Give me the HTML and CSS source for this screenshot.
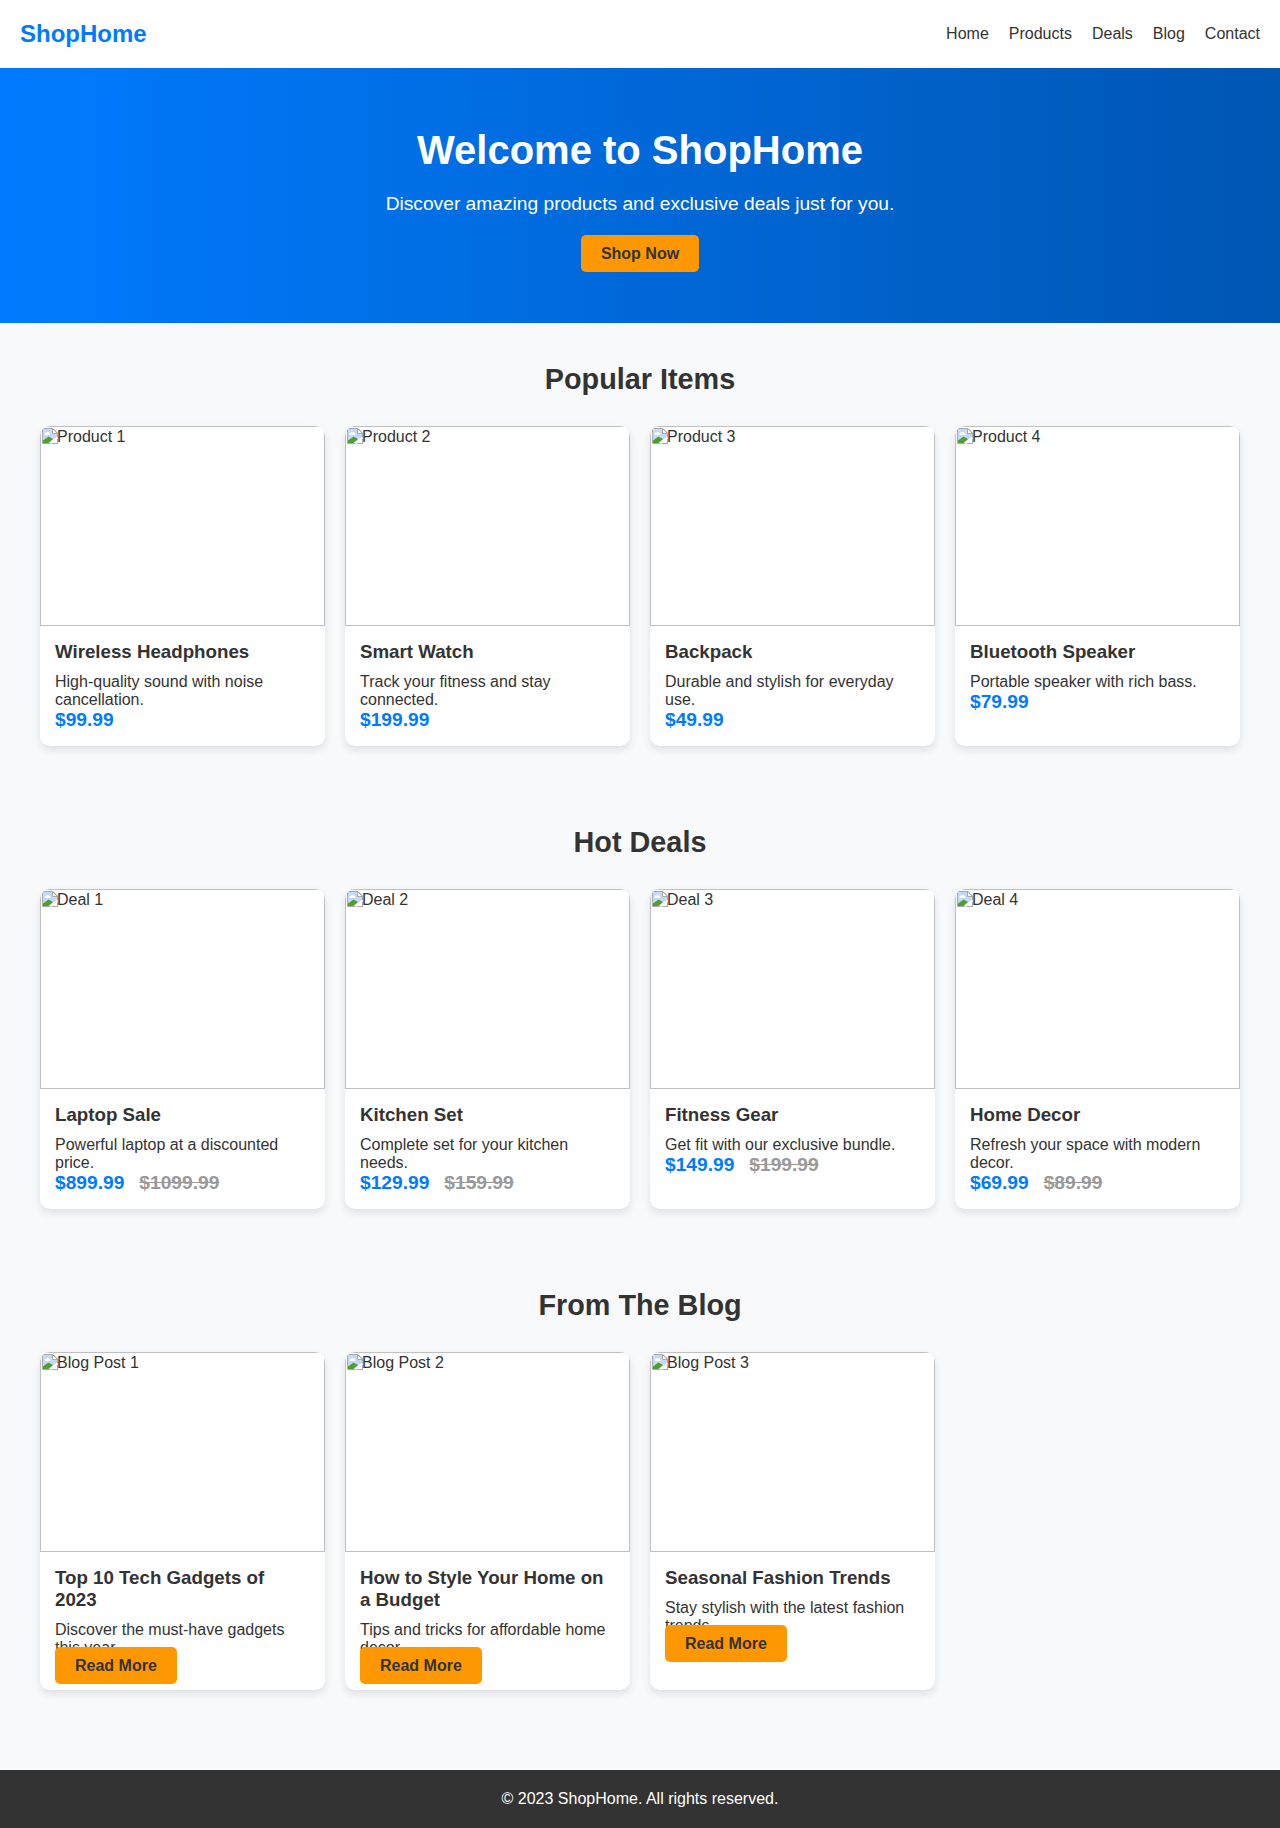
FILE: index.html
```html
<!DOCTYPE html>
<html lang="en">
<head>
<meta charset="utf-8">
<title>ShopHome</title>
<link rel="stylesheet" href="styles.css">
</head>
<body>
<svg class="defs" width="0" height="0" aria-hidden="true"><defs>
<symbol id="broken" viewBox="0 0 16 16">
<path d="M.5.5H11L15.500 5V15.500H.5Z" fill="#fff" stroke="#a9a9a9"/>
<path d="M1 1H10.500L15 5.500V9L6 15H1Z" fill="#c5d8f8"/>
<path d="M2.500 6a1.500 1.500 0 0 1 2-1.500 1.800 1.800 0 0 1 3 .6 1.100 1.100 0 0 1 .6 1.900H3.500A1 1 0 0 1 2.500 6Z" fill="#fff"/>
<path d="M1 15V12.500L6.500 8.500L11 11L6.500 15Z" fill="#4f9f2c"/>
<path d="M10.500 .5V5.500H15.500L10.500 .5Z" fill="#fff" stroke="#a9a9a9"/>
<path d="M8.500 15.500L15.500 9.500" stroke="#fff" stroke-width="1.800" fill="none"/>
<path d="M12 15.500H15.500V12" fill="none" stroke="#a9a9a9"/>
</symbol>
</defs></svg>
<header class="site-header">
  <div class="logo">ShopHome</div>
  <nav class="nav">
    <a href="#">Home</a><a href="#">Products</a><a href="#">Deals</a><a href="#">Blog</a><a href="#">Contact</a>
  </nav>
</header>
<section class="hero">
  <h1>Welcome to ShopHome</h1>
  <p>Discover amazing products and exclusive deals just for you.</p>
  <a href="#" class="btn">Shop Now</a>
</section>

<section class="section">
  <h2>Popular Items</h2>
  <div class="grid">
    <article class="card"><div class="image"><svg class="broken"><use href="#broken"/></svg>Product 1</div><div class="body"><h3>Wireless Headphones</h3><p>High-quality sound with noise cancellation.</p><span class="price">$99.99</span></div></article>
    <article class="card"><div class="image"><svg class="broken"><use href="#broken"/></svg>Product 2</div><div class="body"><h3>Smart Watch</h3><p>Track your fitness and stay connected.</p><span class="price">$199.99</span></div></article>
    <article class="card"><div class="image"><svg class="broken"><use href="#broken"/></svg>Product 3</div><div class="body"><h3>Backpack</h3><p>Durable and stylish for everyday use.</p><span class="price">$49.99</span></div></article>
    <article class="card"><div class="image"><svg class="broken"><use href="#broken"/></svg>Product 4</div><div class="body"><h3>Bluetooth Speaker</h3><p>Portable speaker with rich bass.</p><span class="price">$79.99</span></div></article>
  </div>
</section>

<section class="section">
  <h2>Hot Deals</h2>
  <div class="grid">
    <article class="card"><div class="image"><svg class="broken"><use href="#broken"/></svg>Deal 1</div><div class="body"><h3>Laptop Sale</h3><p>Powerful laptop at a discounted price.</p><span class="price">$899.99</span><span class="old">$1099.99</span></div></article>
    <article class="card"><div class="image"><svg class="broken"><use href="#broken"/></svg>Deal 2</div><div class="body"><h3>Kitchen Set</h3><p>Complete set for your kitchen needs.</p><span class="price">$129.99</span><span class="old">$159.99</span></div></article>
    <article class="card"><div class="image"><svg class="broken"><use href="#broken"/></svg>Deal 3</div><div class="body"><h3>Fitness Gear</h3><p>Get fit with our exclusive bundle.</p><span class="price">$149.99</span><span class="old">$199.99</span></div></article>
    <article class="card"><div class="image"><svg class="broken"><use href="#broken"/></svg>Deal 4</div><div class="body"><h3>Home Decor</h3><p>Refresh your space with modern decor.</p><span class="price">$69.99</span><span class="old">$89.99</span></div></article>
  </div>
</section>

<section class="section">
  <h2>From The Blog</h2>
  <div class="grid">
    <article class="card"><div class="image"><svg class="broken"><use href="#broken"/></svg>Blog Post 1</div><div class="body"><h3>Top 10 Tech Gadgets of 2023</h3><p>Discover the must-have gadgets this year.</p><a href="#" class="btn">Read More</a></div></article>
    <article class="card"><div class="image"><svg class="broken"><use href="#broken"/></svg>Blog Post 2</div><div class="body"><h3>How to Style Your Home on a Budget</h3><p>Tips and tricks for affordable home decor.</p><a href="#" class="btn">Read More</a></div></article>
    <article class="card"><div class="image"><svg class="broken"><use href="#broken"/></svg>Blog Post 3</div><div class="body"><h3>Seasonal Fashion Trends</h3><p>Stay stylish with the latest fashion trends.</p><a href="#" class="btn">Read More</a></div></article>
  </div>
</section>

<footer class="footer">© 2023 ShopHome. All rights reserved.</footer>
</body>
</html>
```
FILE: styles.css
```css
* { box-sizing: border-box; }
body { margin: 0; background: #f8f9fa; color: #333; font-family: Helvetica, Arial, "Liberation Sans", sans-serif; font-size: 16px; }
.defs { position: absolute; }
.site-header { display: flex; justify-content: space-between; align-items: center; padding: 20px; background: #fff; }
.logo { font-size: 24px; font-weight: 700; color: #007bff; }
.nav { display: flex; gap: 20px; }
.nav a { color: #333; text-decoration: none; }
.hero { padding: 60px 20px; text-align: center; color: #fff; background: linear-gradient(90deg, #007bff, #0056b3); }
.hero h1 { margin: 0 0 20px; font-size: 40px; }
.hero p { margin: 0 0 30px; font-size: 19.2px; }
.btn { padding: 10px 20px; border-radius: 5px; background: #ff9800; color: #333; font-weight: 700; text-decoration: none; }
.section { padding: 40px; }
.section h2 { margin: 0 0 30px; font-size: 28.8px; text-align: center; }
.grid { display: grid; grid-template-columns: repeat(4, 1fr); gap: 20px; }
.card { overflow: hidden; border-radius: 10px; background: #fff; box-shadow: 0 4px 8px rgba(0, 0, 0, 0.1); }
.image { height: 200px; padding: 1px 1px 0; border: 1px solid #c0c0c0; }
.broken { width: 16px; height: 16px; margin-right: -1px; vertical-align: top; }
.body { padding: 15px; }
.body h3 { margin: 0 0 10px; font-size: 18.72px; }
.body p { margin: 0; }
.price { color: #007bff; font-size: 19.2px; font-weight: 700; }
.old { margin-left: 15px; color: #999; font-size: 19.2px; font-weight: 700; text-decoration: line-through; }
.footer { margin-top: 40px; padding: 20px; background: #333; color: #fff; text-align: center; }
```
